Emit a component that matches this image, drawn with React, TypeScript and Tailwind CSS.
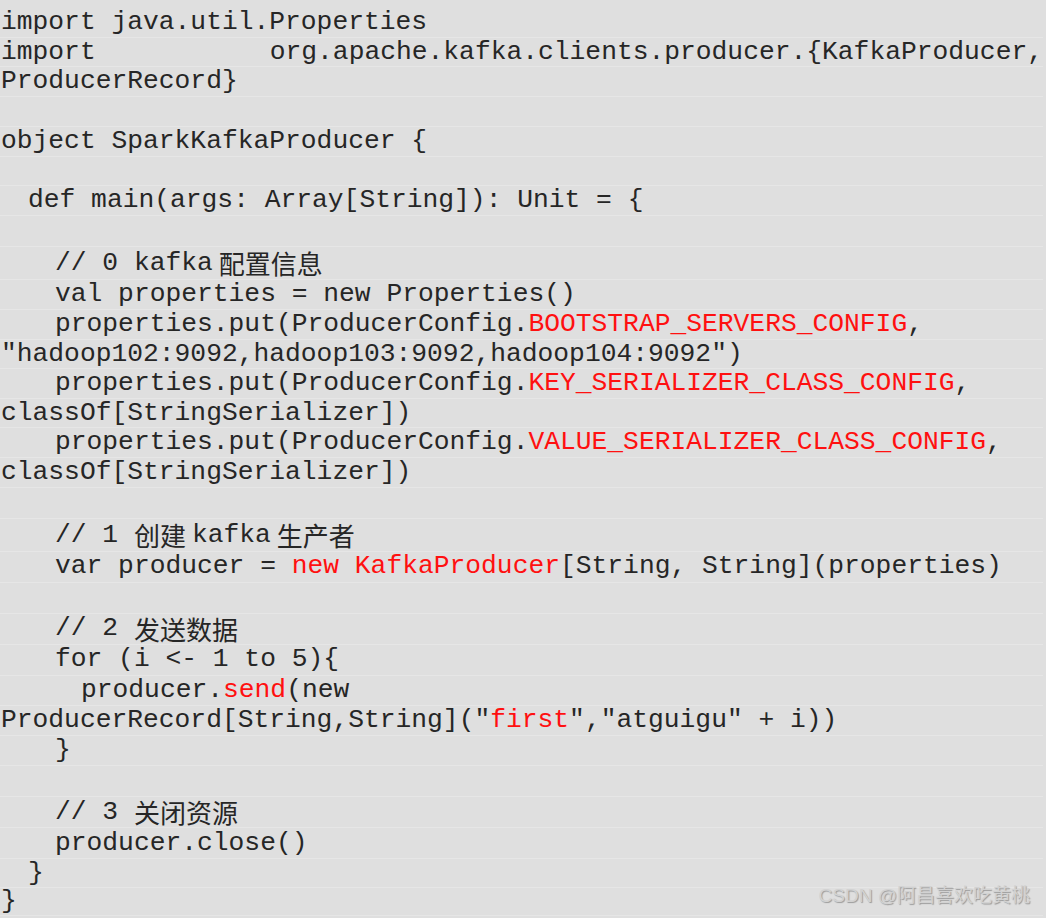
import React from "react";

const mono = "font-['Liberation_Mono','Noto_Sans_CJK_SC',monospace]";

// red keyword in code
const R = ({ children }: { children: React.ReactNode }) => (
  <span className="text-[#ff1010]">{children}</span>
);

// chinese run, word-style autospace on the sides
const Zh = ({ children, left = false, right = false }: { children: React.ReactNode; left?: boolean; right?: boolean }) => (
  <span
    className={`font-['Noto_Sans_CJK_SC',sans-serif] text-[26px] ${left ? "ml-[6px]" : ""} ${right ? "mr-[6px]" : ""}`}
  >
    {children}
  </span>
);

type Row = { h: string; pad: string; body?: React.ReactNode; justify?: boolean };

const rows: Row[] = [
  { h: "h-[29.5px]", pad: "pl-[1px]", body: "import java.util.Properties" },
  {
    h: "h-[29.5px]",
    pad: "pl-[1px] pr-0",
    justify: true,
    body: (
      <>
        <span>import</span>
        <span>org.apache.kafka.clients.producer.{"{"}KafkaProducer,</span>
      </>
    ),
  },
  { h: "h-[30px]", pad: "pl-[1px]", body: "ProducerRecord}" },
  { h: "h-[30px]", pad: "pl-0" },
  { h: "h-[29.5px]", pad: "pl-[1px]", body: "object SparkKafkaProducer {" },
  { h: "h-[29.5px]", pad: "pl-0" },
  { h: "h-[29.5px]", pad: "pl-[28px]", body: "def main(args: Array[String]): Unit = {" },
  { h: "h-[31.5px]", pad: "pl-0" },
  {
    h: "h-[32.5px]",
    pad: "pl-[55px]",
    body: (
      <>
        {"// 0 kafka"}
        <Zh left>配置信息</Zh>
      </>
    ),
  },
  { h: "h-[30.5px]", pad: "pl-[55px]", body: "val properties = new Properties()" },
  {
    h: "h-[29.5px]",
    pad: "pl-[55px]",
    body: (
      <>
        properties.put(ProducerConfig.<R>BOOTSTRAP_SERVERS_CONFIG</R>,
      </>
    ),
  },
  { h: "h-[29.5px]", pad: "pl-[1px]", body: '"hadoop102:9092,hadoop103:9092,hadoop104:9092")' },
  {
    h: "h-[29.5px]",
    pad: "pl-[55px]",
    body: (
      <>
        properties.put(ProducerConfig.<R>KEY_SERIALIZER_CLASS_CONFIG</R>,
      </>
    ),
  },
  { h: "h-[29.5px]", pad: "pl-[1px]", body: "classOf[StringSerializer])" },
  {
    h: "h-[30px]",
    pad: "pl-[55px]",
    body: (
      <>
        properties.put(ProducerConfig.<R>VALUE_SERIALIZER_CLASS_CONFIG</R>,
      </>
    ),
  },
  { h: "h-[29.5px]", pad: "pl-[1px]", body: "classOf[StringSerializer])" },
  { h: "h-[31.5px]", pad: "pl-0" },
  {
    h: "h-[32.5px]",
    pad: "pl-[55px]",
    body: (
      <>
        {"// 1 "}
        <Zh right>创建</Zh>
        kafka
        <Zh left>生产者</Zh>
      </>
    ),
  },
  {
    h: "h-[31px]",
    pad: "pl-[55px]",
    body: (
      <>
        {"var producer = "}
        <R>new KafkaProducer</R>
        {"[String, String](properties)"}
      </>
    ),
  },
  { h: "h-[31px]", pad: "pl-0" },
  {
    h: "h-[31px]",
    pad: "pl-[55px]",
    body: (
      <>
        {"// 2 "}
        <Zh>发送数据</Zh>
      </>
    ),
  },
  { h: "h-[31px]", pad: "pl-[55px]", body: "for (i <- 1 to 5){" },
  {
    h: "h-[30.5px]",
    pad: "pl-[81px]",
    body: (
      <>
        producer.<R>send</R>(new
      </>
    ),
  },
  {
    h: "h-[29.5px]",
    pad: "pl-[1px]",
    body: (
      <>
        {'ProducerRecord[String,String]("'}
        <R>first</R>
        {'","atguigu" + i))'}
      </>
    ),
  },
  { h: "h-[30px]", pad: "pl-[55px]", body: "}" },
  { h: "h-[31px]", pad: "pl-0" },
  {
    h: "h-[31.5px]",
    pad: "pl-[55px]",
    body: (
      <>
        {"// 3 "}
        <Zh>关闭资源</Zh>
      </>
    ),
  },
  { h: "h-[31px]", pad: "pl-[55px]", body: "producer.close()" },
  { h: "h-[29px]", pad: "pl-[28px]", body: "}" },
  { h: "h-[28px]", pad: "pl-[1px]", body: "}" },
];

export default function App() {
  return (
    <div className="relative w-[1046px] h-[918px] overflow-hidden bg-[#dfdfdf]">
      <div className={`pt-[8px] pr-[3px] ${mono} text-[26.3px] text-[#262626]`}>
        {rows.map((r, i) => (
          <div
            key={i}
            className={`${r.h} ${r.pad} flex items-center whitespace-pre leading-none border-b border-[#e6e6e6] ${
              r.justify ? "justify-between" : ""
            }`}
          >
            {r.body}
          </div>
        ))}
      </div>
      <div className="absolute right-[16px] bottom-[8px] font-['Liberation_Sans','Noto_Sans_CJK_SC',sans-serif] text-[19px] text-[#d2d2d2] [text-shadow:1px_1px_1px_#9a9a9a]">
        CSDN @阿昌喜欢吃黄桃
      </div>
    </div>
  );
}
